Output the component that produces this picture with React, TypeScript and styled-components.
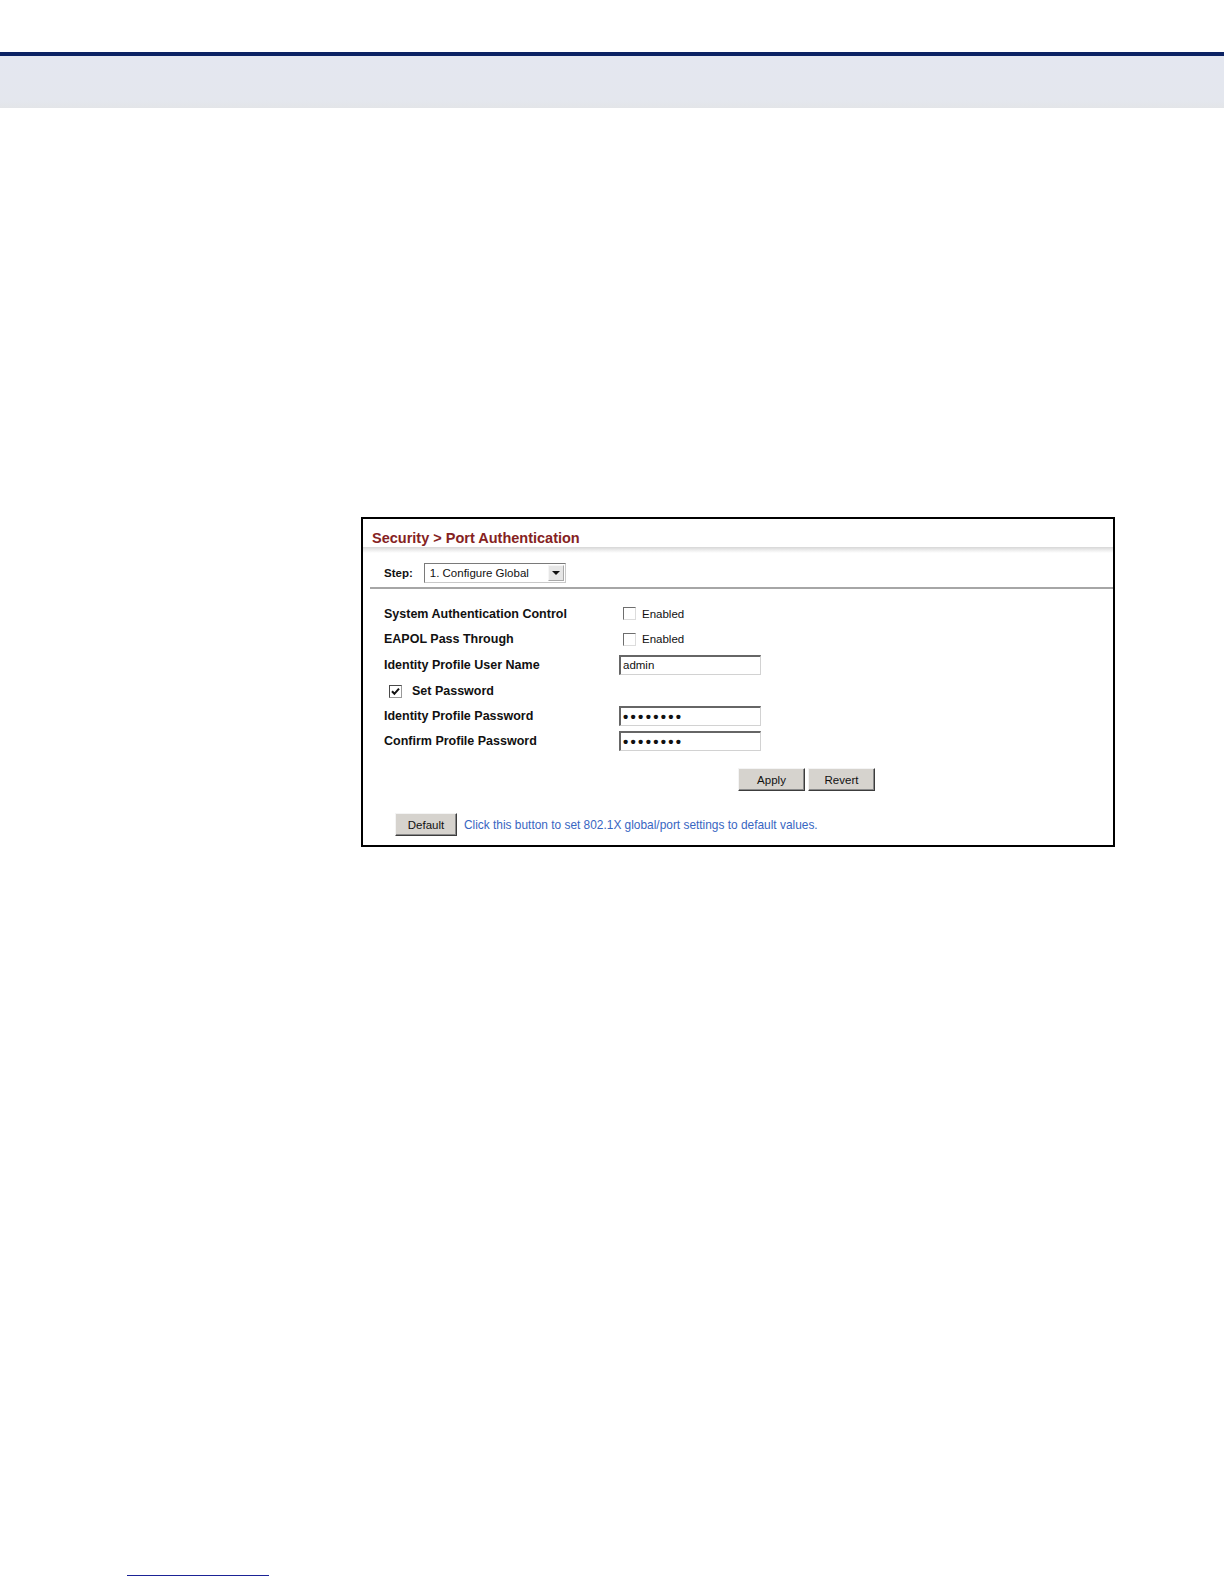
import styled, { createGlobalStyle } from 'styled-components';

const GlobalStyle = createGlobalStyle`
  body {
    margin: 0;
    background: #ffffff;
    font-family: "Liberation Sans", Arial, sans-serif;
  }
`;

const StyledPage = styled.div`
  display: flex;
  flex-direction: column;
  width: 1224px;
  min-height: 1584px;
  box-sizing: border-box;
  padding-top: 52px;
`;

const StyledHeaderBand = styled.div`
  height: 52px;
  border-top: 4px solid #0b2263;
  background: linear-gradient(#e4e7f0, #e4e7ee 85%, #e3e5e8);
`;

const StyledContent = styled.main`
  display: flex;
  padding: 409px 0 0 361px;
`;

const StyledPanel = styled.section`
  display: flex;
  flex-direction: column;
  width: 754px;
  box-sizing: border-box;
  border: 2px solid #000;
  padding-bottom: 9px;
`;

const StyledTitle = styled.div`
  padding: 10px 0 0 9px;
  height: 28px;
  box-sizing: border-box;
  line-height: 18px;
  font-size: 14.5px;
  font-weight: 700;
  color: #852222;
`;

const StyledShade = styled.div`
  height: 6px;
  background: linear-gradient(#d6d6d6, #ececec 50%, #ffffff);
`;

const StyledStepRow = styled.div`
  display: flex;
  align-items: center;
  gap: 11px;
  padding: 10px 0 4px 21px;
  font-size: 11.5px;
`;

const StyledStepLabel = styled.span`
  font-weight: 700;
  font-size: 11.5px;
  color: #111;
`;

const StyledSelect = styled.div`
  display: flex;
  align-items: center;
  justify-content: space-between;
  width: 142px;
  height: 20px;
  box-sizing: border-box;
  border: 1px solid;
  border-color: #7a7a7a #c9c9c9 #c9c9c9 #7a7a7a;
  padding: 0 1px 0 5px;
  color: #111;
`;

const StyledArrowButton = styled.span`
  display: flex;
  align-items: center;
  justify-content: center;
  width: 16px;
  height: 16px;
  box-sizing: border-box;
  background: #e6e6e6;
  border: 1px solid;
  border-color: #f6f6f6 #a9a9a9 #a9a9a9 #f6f6f6;

  &::after {
    content: '';
    border-left: 4px solid transparent;
    border-right: 4px solid transparent;
    border-top: 4px solid #111;
  }
`;

const StyledSeparator = styled.div`
  height: 2px;
  margin-left: 7px;
  background: #a6a6a6;
`;

const StyledFormGrid = styled.div`
  display: grid;
  grid-template-columns: 235px 1fr;
  grid-auto-rows: 25.5px;
  align-items: center;
  padding: 12px 0 0 21px;
`;

const StyledLabel = styled.span`
  font-size: 12.5px;
  font-weight: 700;
  color: #111;
`;

const StyledOption = styled.label<{ $indent?: number; $gap?: number }>`
  display: flex;
  align-items: center;
  gap: ${(p) => p.$gap ?? 6}px;
  padding-left: ${(p) => p.$indent ?? 0}px;
  font-size: 11.5px;
  color: #111;
`;

const StyledWideCell = styled.div`
  grid-column: 1 / -1;
  padding-top: 2px;
`;

const StyledBox = styled.span<{ $checked?: boolean }>`
  display: flex;
  align-items: center;
  justify-content: center;
  width: 13px;
  height: 13px;
  box-sizing: border-box;
  background: #fff;
  border: 1px solid;
  border-color: ${(p) =>
    p.$checked ? '#4a4a4a #9a9a9a #9a9a9a #4a4a4a' : '#6e6e6e #dcdcdc #dcdcdc #6e6e6e'};
`;

const StyledField = styled.div`
  display: flex;
  align-items: center;
  width: 142px;
  height: 20px;
  box-sizing: border-box;
  border-style: solid;
  border-width: 2px 1px 1px 2px;
  border-color: #666 #d2d2d2 #d2d2d2 #666;
  padding-left: 2px;
  font-size: 11.5px;
  color: #111;
  overflow: hidden;
`;

const StyledDots = styled.span`
  font-size: 15px;
  font-weight: 700;
  letter-spacing: 2.3px;
  line-height: 1;
`;

const StyledButtonRow = styled.div`
  display: flex;
  gap: 3px;
  padding: 14px 0 0 375px;
`;

const StyledButton = styled.button<{ $width: number }>`
  width: ${(p) => p.$width}px;
  height: 23px;
  padding: 0;
  background: #d6d3ce;
  border: 1px solid;
  border-color: #f4f4f4 #3c3c3c #3c3c3c #f4f4f4;
  box-shadow: inset -1px -1px 0 #8a8a8a;
  font-family: "Liberation Sans", Arial, sans-serif;
  font-size: 11.5px;
  color: #111;
`;

const StyledDefaultRow = styled.div`
  display: flex;
  align-items: center;
  gap: 7px;
  padding: 22px 0 0 32px;
`;

const StyledHint = styled.span`
  font-size: 11.9px;
  color: #3866c2;
`;

const StyledFootnote = styled.div`
  width: 142px;
  margin: auto 0 8px 127px;
  border-top: 1px solid #1b2396;
`;

const Checkbox = ({ checked = false }: { checked?: boolean }) => (
  <StyledBox $checked={checked}>
    {checked && (
      <svg width="9" height="9" viewBox="0 0 9 9">
        <path d="M1 4.2 L3.4 6.8 L8 1.6" fill="none" stroke="#111" strokeWidth="2" />
      </svg>
    )}
  </StyledBox>
);

const App = () => {
  return (
    <StyledPage>
      <GlobalStyle />
      <StyledHeaderBand />
      <StyledContent>
        <StyledPanel>
          <StyledTitle>Security &gt; Port Authentication</StyledTitle>
          <StyledShade />
          <StyledStepRow>
            <StyledStepLabel>Step:</StyledStepLabel>
            <StyledSelect>
              <span>1. Configure Global</span>
              <StyledArrowButton />
            </StyledSelect>
          </StyledStepRow>
          <StyledSeparator />
          <StyledFormGrid>
            <StyledLabel>System Authentication Control</StyledLabel>
            <StyledOption $indent={4}>
              <Checkbox />
              Enabled
            </StyledOption>
            <StyledLabel>EAPOL Pass Through</StyledLabel>
            <StyledOption $indent={4}>
              <Checkbox />
              Enabled
            </StyledOption>
            <StyledLabel>Identity Profile User Name</StyledLabel>
            <StyledField>admin</StyledField>
            <StyledWideCell>
              <StyledOption $indent={5} $gap={10}>
                <Checkbox checked />
                <StyledLabel>Set Password</StyledLabel>
              </StyledOption>
            </StyledWideCell>
            <StyledLabel>Identity Profile Password</StyledLabel>
            <StyledField>
              <StyledDots>••••••••</StyledDots>
            </StyledField>
            <StyledLabel>Confirm Profile Password</StyledLabel>
            <StyledField>
              <StyledDots>••••••••</StyledDots>
            </StyledField>
          </StyledFormGrid>
          <StyledButtonRow>
            <StyledButton $width={67}>Apply</StyledButton>
            <StyledButton $width={67}>Revert</StyledButton>
          </StyledButtonRow>
          <StyledDefaultRow>
            <StyledButton $width={62}>Default</StyledButton>
            <StyledHint>
              Click this button to set 802.1X global/port settings to default values.
            </StyledHint>
          </StyledDefaultRow>
        </StyledPanel>
      </StyledContent>
      <StyledFootnote />
    </StyledPage>
  );
};

export default App;
